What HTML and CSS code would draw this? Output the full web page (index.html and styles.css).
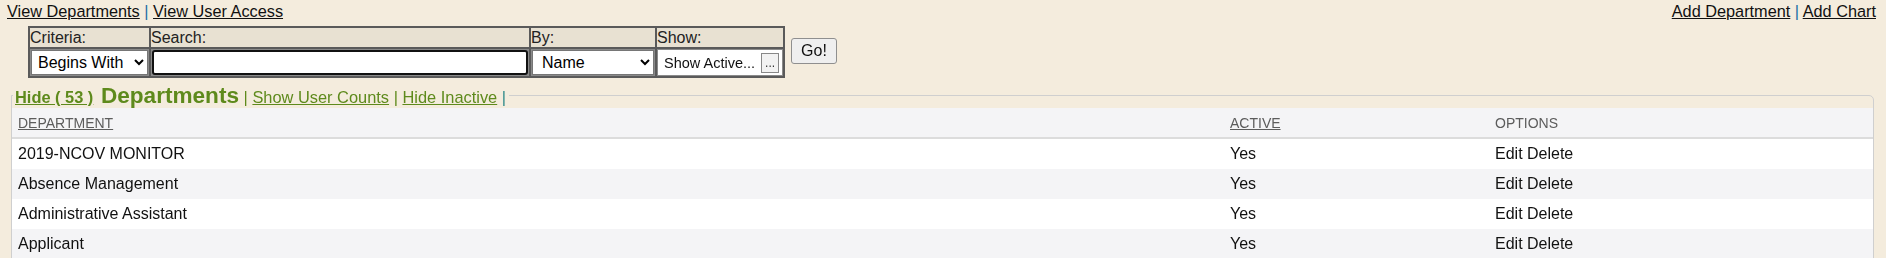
FILE: index.html
```html
<!DOCTYPE html>
<html lang="en">
<head>
    <meta charset="UTF-8">
    <title>Departments</title>
    <link rel="stylesheet" href="styles.css">
</head>
<body>
    <div class="topbar">
        <div class="nav">
            <a href="#">View Departments</a> <span class="sep">|</span> <a href="#">View User Access</a>
        </div>
        <div class="nav">
            <a href="#">Add Department</a> <span class="sep">|</span> <a href="#">Add Chart</a>
        </div>
    </div>

    <form class="filter">
        <table class="filter-table">
            <tr>
                <th class="c-crit">Criteria:</th>
                <th class="c-search">Search:</th>
                <th class="c-by">By:</th>
                <th class="c-show">Show:</th>
            </tr>
            <tr>
                <td>
                    <select class="sel sel-crit">
                        <option>Begins With</option>
                        <option>Contains</option>
                    </select>
                </td>
                <td><input type="text" class="search" autofocus></td>
                <td>
                    <select class="sel sel-by">
                        <option>Name</option>
                        <option>Code</option>
                    </select>
                </td>
                <td>
                    <div class="show-box">
                        <span class="show-text">Show Active...</span>
                        <button type="button" class="dots">...</button>
                    </div>
                </td>
            </tr>
        </table>
        <button type="button" class="go">Go!</button>
    </form>

    <fieldset class="panel">
        <legend>
            <a href="#" class="hide-link">Hide ( 53 )</a>
            <span class="title">Departments</span>
            <span class="bar">|</span> <a href="#" class="opt">Show User Counts</a>
            <span class="bar">|</span> <a href="#" class="opt">Hide Inactive</a>
            <span class="bar">|</span>
        </legend>
        <table class="grid">
            <thead>
                <tr>
                    <th><a href="#">DEPARTMENT</a></th>
                    <th class="col-active"><a href="#">ACTIVE</a></th>
                    <th class="col-opts">OPTIONS</th>
                </tr>
            </thead>
            <tbody>
                <tr>
                    <td>2019-NCOV MONITOR</td>
                    <td>Yes</td>
                    <td>Edit Delete</td>
                </tr>
                <tr>
                    <td>Absence Management</td>
                    <td>Yes</td>
                    <td>Edit Delete</td>
                </tr>
                <tr>
                    <td>Administrative Assistant</td>
                    <td>Yes</td>
                    <td>Edit Delete</td>
                </tr>
                <tr>
                    <td>Applicant</td>
                    <td>Yes</td>
                    <td>Edit Delete</td>
                </tr>
            </tbody>
        </table>
    </fieldset>
</body>
</html>
```

FILE: styles.css
```css
body {
    font-family: 'Liberation Sans', Arial, sans-serif;
    font-size: 16px;
    background: #f4ecdd;
    margin: 0;
    padding: 0;
    color: #111;
}
a {
    color: #111;
}
.topbar {
    display: flex;
    justify-content: space-between;
    padding: 2px 10px 0 7px;
    line-height: 18px;
    font-size: 16.3px;
}
.sep {
    color: #1c6ea4;
}
.filter {
    display: flex;
    align-items: flex-start;
    margin: 6px 0 0 28px;
    gap: 6px;
}
.filter-table {
    border: 2px solid #5a5a5a;
    border-collapse: collapse;
    background: #f4ecdd;
}
.filter-table th,
.filter-table td {
    border: 2px solid #5a5a5a;
    padding: 0;
    text-align: left;
}
.filter-table th {
    background: #e8e1d2;
    font-weight: normal;
    height: 19px;
    line-height: 19px;
    color: #222;
}
.filter-table td {
    height: 27px;
    background: #8a8a8a;
}
.c-crit { width: 119px; }
.c-search { width: 378px; }
.c-by { width: 124px; }
.c-show { width: 126px; }
.sel {
    font-family: 'Liberation Sans', Arial, sans-serif;
    font-size: 16px;
    height: 25px;
    margin: 1px;
    display: block;
    border: 1px solid #767676;
    border-radius: 0;
    background: #fff;
    color: #000;
    padding: 0 2px;
}
.sel-crit { width: 117px; }
.sel-by { width: 122px; padding-left: 5px; }
.search {
    display: block;
    box-sizing: border-box;
    width: 376px;
    height: 25px;
    margin: 1px;
    border: 2px solid #111;
    border-radius: 3px;
    outline: none;
    background: #fff;
    font-size: 16px;
    padding: 0 4px;
}
.show-box {
    display: flex;
    align-items: center;
    background: #fff;
    margin: 1px;
    height: 25px;
    padding: 0 2px 0 6px;
    gap: 6px;
}
.show-text {
    font-size: 14.5px;
    color: #111;
}
.dots {
    width: 18px;
    height: 20px;
    padding: 0;
    border: 1px solid #888;
    background: #f2f2f2;
    font-size: 12px;
    line-height: 12px;
    color: #333;
}
.go {
    margin-top: 12px;
    width: 46px;
    height: 26px;
    font-family: 'Liberation Sans', Arial, sans-serif;
    font-size: 16px;
    background: #efefef;
    border: 1px solid #8f8f8f;
    border-radius: 3px;
    color: #111;
    padding: 0;
}
.panel {
    margin: 5px 12px 0 11px;
    padding: 0;
    border: 1px solid #cfcfcf;
    border-radius: 0 5px 0 0;
}
.panel legend {
    padding: 0 3px 0 2px;
    margin-left: 1px;
    color: #5e8a1c;
    line-height: 25px;
    height: 25px;
    font-size: 16.4px;
}
.panel legend a {
    color: #5e8a1c;
}
.hide-link {
    font-weight: bold;
}
.title {
    font-size: 22.6px;
    font-weight: bold;
    margin-left: 3px;
}
.bar {
    color: #5e8a1c;
}
.bar:last-child {
    color: #2f8a8a;
}
.grid {
    width: 100%;
    border-collapse: collapse;
}
.grid th {
    background: #f4f4f6;
    font-size: 14px;
    font-weight: normal;
    text-align: left;
    color: #5c5c5c;
    height: 29px;
    padding: 0 6px;
    border-bottom: 2px solid #dcdcdc;
}
.grid th a {
    color: #5c5c5c;
}
.col-active { width: 253px; }
.col-opts { width: 372px; }
.grid td {
    height: 30px;
    padding: 0 6px;
    background: #fff;
}
.grid tbody tr:nth-child(even) td {
    background: #f4f4f6;
}
```
